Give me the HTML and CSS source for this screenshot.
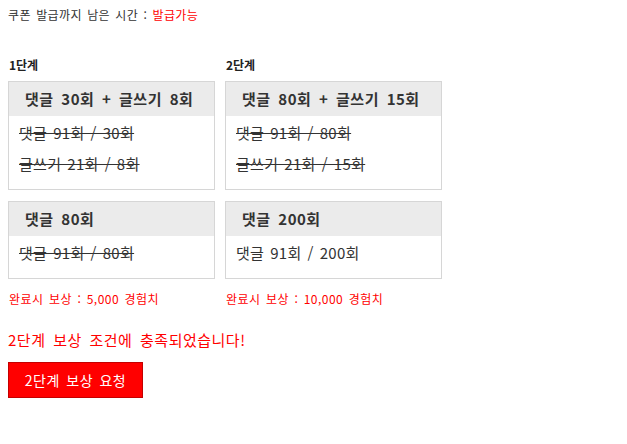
FILE: index.html
```html
<!DOCTYPE html>
<html lang="ko">
<head>
<meta charset="utf-8">
<link rel="stylesheet" href="styles.css">
</head>
<body>
<p class="timer">쿠폰 발급까지 남은 시간 : <span class="red">발급가능</span></p>
<div class="stages">
  <div class="stage stage-1">
    <h3 class="stage-title">1단계</h3>
    <div class="box">
      <div class="box-head">댓글 30회 + 글쓰기 8회</div>
      <div class="box-body">
        <div class="row done">댓글 91회 / 30회</div>
        <div class="row done">글쓰기 21회 / 8회</div>
      </div>
    </div>
    <div class="box">
      <div class="box-head">댓글 80회</div>
      <div class="box-body">
        <div class="row done">댓글 91회 / 80회</div>
      </div>
    </div>
    <p class="reward">완료시 보상 : 5,000 경험치</p>
  </div>
  <div class="stage stage-2">
    <h3 class="stage-title">2단계</h3>
    <div class="box">
      <div class="box-head">댓글 80회 + 글쓰기 15회</div>
      <div class="box-body">
        <div class="row done">댓글 91회 / 80회</div>
        <div class="row done">글쓰기 21회 / 15회</div>
      </div>
    </div>
    <div class="box">
      <div class="box-head">댓글 200회</div>
      <div class="box-body">
        <div class="row">댓글 91회 / 200회</div>
      </div>
    </div>
    <p class="reward">완료시 보상 : 10,000 경험치</p>
  </div>
</div>
<p class="message">2단계 보상 조건에 충족되었습니다!</p>
<button class="request">2단계 보상 요청</button>
</body>
</html>
```

FILE: styles.css
```css
body {
  margin: 8px;
  font-family: "Noto Sans CJK KR", "Noto Sans", sans-serif;
  color: #333;
  background: #fff;
}
.timer {
  margin: 0;
  font-size: 12px;
  line-height: 14px;
  letter-spacing: 0.4px;
  word-spacing: 1.5px;
  color: #333;
}
.red { color: #ff0000; }
.stages {
  display: flex;
  gap: 10px;
  margin-top: 36px;
}
.stage-1 { width: 207px; }
.stage-2 { width: 217px; }
.stage-title {
  margin: 0 0 9px 1px;
  font-size: 12px;
  line-height: 14px;
  font-weight: bold;
  color: #222;
}
.box {
  border: 1px solid #d6d6d6;
  margin-bottom: 11px;
}
.box-head {
  background: #ebebeb;
  height: 34px;
  line-height: 34px;
  padding: 0 16px;
  font-size: 15px;
  font-weight: bold;
  letter-spacing: 0.5px;
  word-spacing: 3px;
  color: #333;
  white-space: nowrap;
}
.box-body {
  padding: 1px 10px 10px;
}
.row {
  line-height: 31px;
  font-size: 15px;
  letter-spacing: 0.3px;
  word-spacing: 1.5px;
  color: #333;
  white-space: nowrap;
}
.row.done { text-decoration: line-through; }
.reward {
  margin: 13px 0 0 1px;
  font-size: 12px;
  line-height: 14px;
  letter-spacing: 0.5px;
  word-spacing: 1.5px;
  color: #ff0000;
}
.message {
  margin: 24px 0 0;
  font-size: 15px;
  line-height: 20px;
  letter-spacing: 0.5px;
  word-spacing: 3px;
  color: #ff0000;
}
.request {
  display: block;
  margin-top: 12px;
  width: 135px;
  height: 36px;
  background: #ff0000;
  border: 1px solid #c40000;
  color: #fff;
  font-family: inherit;
  font-size: 14px;
  letter-spacing: 0.5px;
  word-spacing: 2px;
  padding: 0;
}
```
